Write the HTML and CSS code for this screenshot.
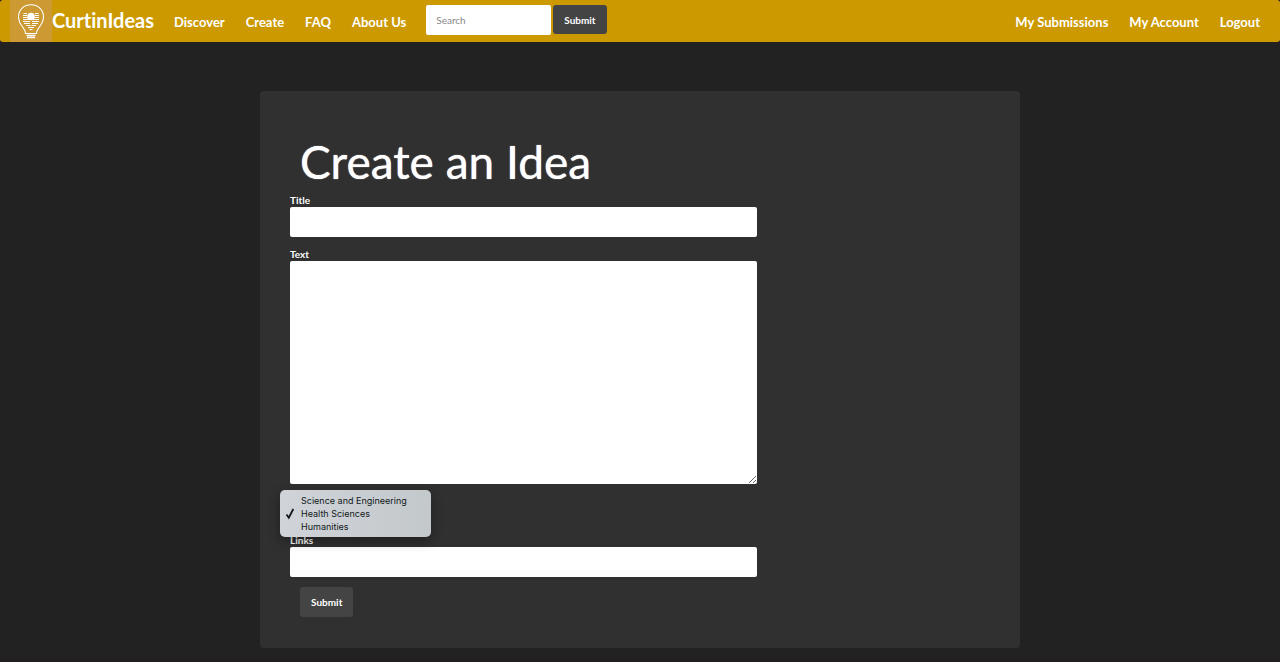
FILE: index.html
```html
<!DOCTYPE html>
<html lang="en">
<head>
<meta charset="utf-8">
<meta name="viewport" content="width=device-width, initial-scale=1">
<title>CurtinIdeas - Create an Idea</title>
<link rel="stylesheet" href="styles.css">
</head>
<body>
<header class="navbar">
  <a class="brand" href="#">
    <svg class="brand-logo" viewBox="0 0 42 42" aria-hidden="true">
      <rect width="42" height="42" fill="#cc9933"/>
      <g fill="none" stroke="#fff">
        <path d="M15.500 33.500 C15.500 27.500 8.500 25.500 8.500 17 C8.500 9.500 14 4.700 21 4.700 S33.500 9.500 33.500 17 C33.500 25.500 26.500 27.500 26.500 33.500 Z" stroke-width="1.100"/>
        <path d="M13.500 13.500H17M25 13.500H28.500M13 15.500H17M25 15.500H29M13 17.500H17.500M24.500 17.500H29M13 19.500H19M23 19.500H29M13 21.500H20M22 21.500H29M14 23.500H20M22 23.500H28M16 25.500H20.500M21.500 25.500H26M18 27.500H24M19.500 29.500H22.500" stroke-width="1"/>
        <path d="M16.500 35.500H25.500M17 37.500H25" stroke-width="1.300"/>
      </g>
      <circle cx="21" cy="16.500" r="3.800" fill="#fff"/>
    </svg>
    <span class="brand-name">CurtinIdeas</span>
  </a>
  <nav class="nav-links" aria-label="Main">
    <a href="#">Discover</a>
    <a href="#">Create</a>
    <a href="#">FAQ</a>
    <a href="#">About Us</a>
  </nav>
  <form class="search" role="search">
    <input class="field search-field" type="search" placeholder="Search" aria-label="Search">
    <button class="button" type="submit">Submit</button>
  </form>
  <nav class="nav-links account-links" aria-label="Account">
    <a href="#">My Submissions</a>
    <a href="#">My Account</a>
    <a href="#">Logout</a>
  </nav>
</header>
<main class="panel">
  <h1 class="heading">Create an Idea</h1>
  <form class="idea-form">
    <div class="form-group">
      <label for="title">Title</label>
      <input class="field" id="title" type="text">
    </div>
    <div class="form-group">
      <label for="text">Text</label>
      <textarea class="field text-area" id="text"></textarea>
    </div>
    <div class="category">
      <select class="category-menu" size="3" aria-label="Category">
        <option>Science and Engineering</option>
        <option selected>Health Sciences</option>
        <option>Humanities</option>
      </select>
      <svg class="check" viewBox="0 0 10 12" aria-hidden="true"><path d="M1.500 6.500L3.800 9.700L8.300 1" fill="none" stroke="#111820" stroke-width="1.800"/></svg>
    </div>
    <div class="form-group">
      <label for="links">Links</label>
      <input class="field" id="links" type="text">
    </div>
    <button class="button submit-idea" type="submit">Submit</button>
  </form>
</main>
</body>
</html>
```
FILE: styles.css
```css
* {
  box-sizing: border-box;
}

body {
  margin: 0;
  min-height: 100vh;
  background: #222;
  border-bottom: 2px solid #231c20;
  color: #fff;
  font-family: Lato, sans-serif;
  font-size: 10px;
  font-variant-ligatures: none;
  line-height: 14px;
}

.navbar {
  display: flex;
  align-items: flex-start;
  padding: 0 10px;
  border-radius: 3px;
  background: #c90;
}

.brand {
  display: flex;
  color: #fff;
  text-decoration: none;
}

.brand-logo {
  width: 42px;
  height: 42px;
}

.brand-name {
  padding-right: 10px;
  font-size: 20px;
  font-weight: 700;
  line-height: 40px;
}

.nav-links {
  display: flex;
  gap: 1px;
}

.nav-links a {
  height: 42px;
  padding: 0 10px;
  color: #fff;
  font-size: 13px;
  font-weight: 700;
  line-height: 44px;
  text-decoration: none;
}

.account-links {
  margin-left: auto;
}

.search {
  display: flex;
  gap: 2px;
  padding: 5px 10px;
}

.field {
  display: block;
  width: 100%;
  height: 30px;
  padding: 5px 10px;
  border: 0;
  border-radius: 2px;
  background: #fff;
  color: #555;
  font: inherit;
  appearance: none;
}

.field::placeholder {
  color: #888;
}

.search-field {
  width: 125px;
}

.button {
  height: 30px;
  padding: 0 11px;
  border: 0;
  border-radius: 3px;
  background: #444;
  color: #fff;
  font: 700 10px/30px Lato, sans-serif;
}

.search .button {
  height: 29px;
}

.panel {
  width: calc(100% - 40px);
  max-width: 760px;
  margin: 49px auto 10px;
  padding: 40px 30px 31px;
  border-radius: 4px;
  background: #303030;
}

.heading {
  margin: 0 10px;
  font-size: 46px;
  font-weight: 400;
  line-height: 62px;
  text-shadow: 0 0 1px #fff;
}

.idea-form {
  max-width: 467px;
}

.form-group {
  margin-bottom: 10px;
}

label {
  display: block;
  font-weight: 700;
  line-height: 14px;
}

.text-area {
  height: 223px;
  resize: vertical;
}

.category {
  position: relative;
  height: 39px;
}

.category-menu {
  position: absolute;
  top: -4px;
  left: -10px;
  width: 151px;
  height: 47px;
  padding: 5px 0 3px;
  overflow: hidden;
  border: 0;
  border-radius: 5px;
  outline: 0;
  background: linear-gradient(90deg, #d0d4d9, #c3c8cb);
  box-shadow: 0 4px 12px rgb(0 0 0 / 35%);
  color: #111820;
  font: 9px/13px Inter, sans-serif;
}

.category-menu option {
  min-height: 13px;
  padding: 0 0 0 21px;
  color: #111820;
  line-height: 13px;
}

.category-menu option:checked {
  background: linear-gradient(90deg, #d0d4d9, #c3c8cb);
  color: #111820;
}

.check {
  position: absolute;
  top: 14px;
  left: -5px;
  width: 10px;
  height: 12px;
  pointer-events: none;
}

.submit-idea {
  margin-left: 10px;
}
```
